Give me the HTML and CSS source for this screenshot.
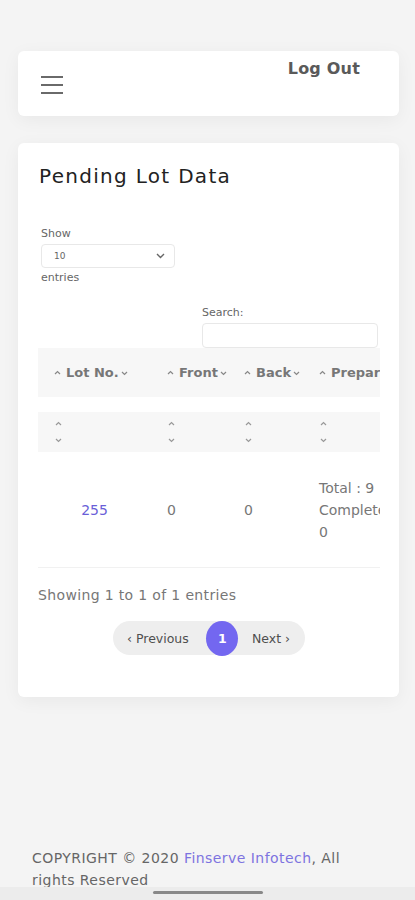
FILE: index.html
```html
<!DOCTYPE html>
<html lang="en">
<head>
<meta charset="utf-8">
<title>Pending Lot Data</title>
<link rel="stylesheet" href="styles.css">
</head>
<body>
<div class="page">
  <header class="topbar">
    <button class="menu" aria-label="Menu">
      <span></span><span></span><span></span>
    </button>
    <a class="logout" href="#">Log Out</a>
  </header>

  <section class="card">
    <h1 class="title">Pending Lot Data</h1>

    <div class="length">
      <div class="lbl">Show</div>
      <div class="select"><span>10</span>
        <svg width="9" height="6" viewBox="0 0 9 6"><path d="M1 1l3.5 3.5L8 1" fill="none" stroke="#666" stroke-width="1.4"/></svg>
      </div>
      <div class="lbl">entries</div>
    </div>

    <div class="search">
      <div class="lbl">Search:</div>
      <div class="input"></div>
    </div>

    <div class="table-wrap">
      <div class="table">
        <div class="row head">
          <div class="c c1"><svg class="up" width="7" height="5" viewBox="0 0 7 5"><path d="M1 4l2.5-2.5L6 4" fill="none" stroke="#888" stroke-width="1.2"/></svg>Lot No.<svg class="dn" width="7" height="5" viewBox="0 0 7 5"><path d="M1 1l2.5 2.5L6 1" fill="none" stroke="#888" stroke-width="1.2"/></svg></div>
          <div class="c c2"><svg class="up" width="7" height="5" viewBox="0 0 7 5"><path d="M1 4l2.5-2.5L6 4" fill="none" stroke="#888" stroke-width="1.2"/></svg>Front<svg class="dn" width="7" height="5" viewBox="0 0 7 5"><path d="M1 1l2.5 2.5L6 1" fill="none" stroke="#888" stroke-width="1.2"/></svg></div>
          <div class="c c3"><svg class="up" width="7" height="5" viewBox="0 0 7 5"><path d="M1 4l2.5-2.5L6 4" fill="none" stroke="#888" stroke-width="1.2"/></svg>Back<svg class="dn" width="7" height="5" viewBox="0 0 7 5"><path d="M1 1l2.5 2.5L6 1" fill="none" stroke="#888" stroke-width="1.2"/></svg></div>
          <div class="c c4"><svg class="up" width="7" height="5" viewBox="0 0 7 5"><path d="M1 4l2.5-2.5L6 4" fill="none" stroke="#888" stroke-width="1.2"/></svg>Preparation</div>
        </div>
        <div class="row filter">
          <div class="c c1"><svg width="7" height="5" viewBox="0 0 7 5"><path d="M1 4l2.5-2.5L6 4" fill="none" stroke="#999" stroke-width="1.2"/></svg><svg width="7" height="5" viewBox="0 0 7 5"><path d="M1 1l2.5 2.5L6 1" fill="none" stroke="#999" stroke-width="1.2"/></svg></div>
          <div class="c c2"><svg width="7" height="5" viewBox="0 0 7 5"><path d="M1 4l2.5-2.5L6 4" fill="none" stroke="#999" stroke-width="1.2"/></svg><svg width="7" height="5" viewBox="0 0 7 5"><path d="M1 1l2.5 2.5L6 1" fill="none" stroke="#999" stroke-width="1.2"/></svg></div>
          <div class="c c3"><svg width="7" height="5" viewBox="0 0 7 5"><path d="M1 4l2.5-2.5L6 4" fill="none" stroke="#999" stroke-width="1.2"/></svg><svg width="7" height="5" viewBox="0 0 7 5"><path d="M1 1l2.5 2.5L6 1" fill="none" stroke="#999" stroke-width="1.2"/></svg></div>
          <div class="c c4"><svg width="7" height="5" viewBox="0 0 7 5"><path d="M1 4l2.5-2.5L6 4" fill="none" stroke="#999" stroke-width="1.2"/></svg><svg width="7" height="5" viewBox="0 0 7 5"><path d="M1 1l2.5 2.5L6 1" fill="none" stroke="#999" stroke-width="1.2"/></svg></div>
        </div>
        <div class="row data">
          <div class="c c1 center"><a href="#">255</a></div>
          <div class="c c2">0</div>
          <div class="c c3">0</div>
          <div class="c c4">Total : 9<br>Completed :<br>0</div>
        </div>
      </div>
    </div>

    <div class="info">Showing 1 to 1 of 1 entries</div>

    <nav class="pager">
      <a class="pg" href="#">&#8249; Previous</a>
      <a class="pg cur" href="#">1</a>
      <a class="pg" href="#">Next &#8250;</a>
    </nav>
  </section>

  <footer class="footer">COPYRIGHT © 2020 <a href="#">Finserve Infotech</a>, All rights Reserved</footer>
</div>
<div class="sysbar"><span></span></div>
</body>
</html>
```
FILE: styles.css
```css
* { box-sizing: border-box; }
html, body { margin: 0; padding: 0; }
body {
  background: #f4f4f4;
  font-family: "DejaVu Sans", "Open Sans", sans-serif;
  color: #666;
  height: 900px;
  overflow: hidden;
}
a { text-decoration: none; }
.page { padding: 51px 16px 0 18px; }

.topbar {
  height: 65px;
  background: #fff;
  border-radius: 6px;
  box-shadow: 0 4px 18px rgba(0,0,0,0.05);
  display: flex;
  justify-content: space-between;
  align-items: flex-start;
  padding: 0 39px 0 23px;
}
.menu {
  border: 0; background: none; padding: 0;
  margin-top: 25px;
  width: 22px;
  display: flex; flex-direction: column; gap: 6px;
}
.menu span { display: block; height: 2px; background: #6a6a6a; }
.logout {
  margin-top: 8px;
  font-size: 16px;
  font-weight: 700;
  color: #5a5a5a;
  letter-spacing: 0.2px;
}

.card {
  margin-top: 27px;
  height: 554px;
  background: #fff;
  border-radius: 6px;
  box-shadow: 0 4px 18px rgba(0,0,0,0.05);
  padding: 20px 19px 0 20px;
}
.title {
  margin: 0 0 0 1px;
  font-size: 20px;
  font-weight: 400;
  color: #222;
  line-height: 26px;
  letter-spacing: 1.3px;
}
.lbl { font-size: 11px; color: #666; line-height: 14px; }
.length { margin: 38px 0 0 3px; }
.select {
  width: 134px; height: 24px;
  border: 1px solid #e8e8e8; border-radius: 4px;
  margin: 3px 0 3px;
  display: flex; align-items: center; justify-content: space-between;
  padding: 0 9px 0 12px;
  font-size: 9px; color: #666;
}
.search { margin: 21px 0 0 164px; }
.search .input {
  margin-top: 3px;
  width: 176px; height: 25px;
  border: 1px solid #e8e8e8; border-radius: 4px;
}

.table-wrap { width: 342px; overflow: hidden; }
.table { width: 480px; }
.row { display: flex; }
.c { padding-left: 16px; flex: none; white-space: nowrap; }
.c1 { width: 113px; }
.c2 { width: 77px; }
.c3 { width: 75px; }
.c4 { width: 215px; }
.head { background: #f7f7f7; height: 49px; align-items: center; font-size: 13px; font-weight: 700; color: #777; }
.head .c { display: flex; align-items: center; }
.head .up { margin-right: 5px; }
.head .dn { margin-left: 2px; position: relative; top: 1px; }
.filter { background: #f7f7f7; height: 40px; margin-top: 15px; align-items: center; }
.filter .c { display: flex; flex-direction: column; gap: 12px; padding-left: 17px; }
.data { height: 116px; align-items: center; font-size: 14px; line-height: 22px; color: #777; border-bottom: 1px solid #f1f1f1; }
.data .center { text-align: center; padding-left: 0; }
.data a { color: #6a5fd8; font-weight: 500; }

.info { margin-top: 17px; font-size: 14px; color: #777; line-height: 20px; letter-spacing: 0.35px; }
.pager {
  margin: 16px auto 0;
  width: 192px; height: 34px;
  background: #eee;
  border-radius: 17px;
  display: flex; align-items: center; justify-content: space-between;
  padding: 0 15px 0 14px;
}
.pg { font-size: 12.5px; font-weight: 400; color: #4f4f4f; }
.pg.cur {
  width: 32px; height: 35px; border-radius: 50%;
  background: #7367f0; color: #fff; font-weight: 700;
  display: flex; align-items: center; justify-content: center;
  margin-left: 4px;
}

.footer {
  margin: 150px 0 0 14px;
  font-size: 14px; line-height: 22px; color: #666;
  width: 332px;
  letter-spacing: 0.45px;
}
.footer a { color: #7d73e0; }

.sysbar {
  position: fixed; left: 0; right: 0; bottom: 0; height: 13px;
  background: #ececec;
  display: flex; justify-content: center;
}
.sysbar span { width: 110px; height: 3px; background: #888; border-radius: 2px; margin-top: 4px; }
```
